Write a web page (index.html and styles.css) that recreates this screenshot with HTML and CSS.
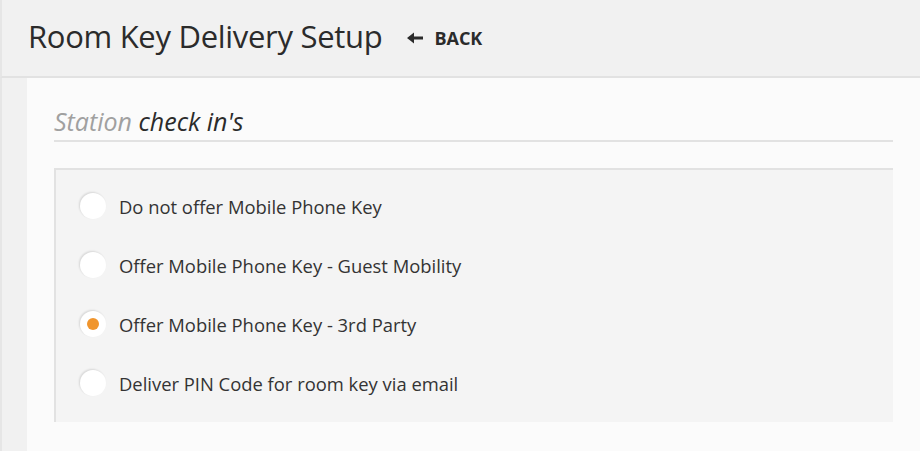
FILE: index.html
```html
<!DOCTYPE html>
<html lang="en">
<head>
  <meta charset="UTF-8">
  <title>Room Key Delivery Setup</title>
  <link rel="stylesheet" href="styles.css">
</head>
<body>

  <!-- Page header -->
  <header class="page-header">
    <h1>Room Key Delivery Setup</h1>
    <a class="back-link" href="#">
      <svg width="17" height="12" viewBox="0 0 17 12"><path d="M0 6 L7 0.5 L7 4.5 L16 4.5 L16 7.5 L7 7.5 L7 11.5 Z" fill="#2b2b2b"/></svg>
      BACK
    </a>
  </header>

  <div class="layout">
    <div class="sidebar"></div>

    <main class="content">
      <h2 class="section-title"><span class="muted">Station</span> check in's</h2>

      <!-- Delivery options -->
      <div class="options-box">
        <label class="option">
          <input type="radio" name="delivery">
          <span class="radio"></span>
          Do not offer Mobile Phone Key
        </label>
        <label class="option">
          <input type="radio" name="delivery">
          <span class="radio"></span>
          Offer Mobile Phone Key - Guest Mobility
        </label>
        <label class="option">
          <input type="radio" name="delivery" checked>
          <span class="radio"></span>
          Offer Mobile Phone Key - 3rd Party
        </label>
        <label class="option">
          <input type="radio" name="delivery">
          <span class="radio"></span>
          Deliver PIN Code for room key via email
        </label>
      </div>
    </main>
  </div>

</body>
</html>
```

FILE: styles.css
```css
* {
  margin: 0;
  padding: 0;
  box-sizing: border-box;
}

body {
  font-family: 'Open Sans', 'Noto Sans', sans-serif;
  background-color: #fbfbfb;
  color: #333;
  height: 451px;
  display: flex;
  flex-direction: column;
}

/* Header */
.page-header {
  height: 78px;
  background-color: #f1f1f1;
  border-bottom: 2px solid #e2e2e2;
  border-left: 2px solid #e6e6e6;
  display: flex;
  align-items: center;
  padding: 0 0 4px 26px;
}

.page-header h1 {
  font-size: 31px;
  font-weight: 400;
  color: #2b2b2b;
  letter-spacing: -0.3px;
}

.back-link {
  display: flex;
  align-items: center;
  gap: 10px;
  margin-left: 25px;
  margin-top: 3px;
  font-size: 18px;
  font-weight: 700;
  color: #2b2b2b;
  text-decoration: none;
}

/* Body layout */
.layout {
  flex: 1;
  display: flex;
}

.sidebar {
  width: 27px;
  background-color: #f1f1f1;
  border-left: 2px solid #e6e6e6;
}

.content {
  flex: 1;
  padding: 26px 27px 0 27px;
}

.section-title {
  font-size: 25px;
  font-weight: 400;
  font-style: italic;
  color: #2b2b2b;
  padding-bottom: 2px;
  border-bottom: 2px solid #e2e2e2;
}

.section-title .muted {
  color: #a0a0a0;
}

/* Options */
.options-box {
  margin-top: 26px;
  background-color: #f4f4f4;
  border-top: 2px solid #e2e2e2;
  border-left: 2px solid #e2e2e2;
  padding: 23px 0 26px 24px;
  display: flex;
  flex-direction: column;
  gap: 33px;
}

.option {
  display: flex;
  align-items: center;
  gap: 13px;
  font-size: 18.4px;
  color: #333;
  height: 26px;
  cursor: pointer;
}

.option input {
  display: none;
}

.radio {
  flex-shrink: 0;
  width: 26px;
  height: 26px;
  border-radius: 50%;
  background-color: #fff;
  box-shadow: -1px -1px 2px rgba(0, 0, 0, 0.12);
  display: flex;
  align-items: center;
  justify-content: center;
}

.option input:checked + .radio::after {
  content: '';
  width: 12px;
  height: 12px;
  border-radius: 50%;
  background-color: #f0952d;
}
```
